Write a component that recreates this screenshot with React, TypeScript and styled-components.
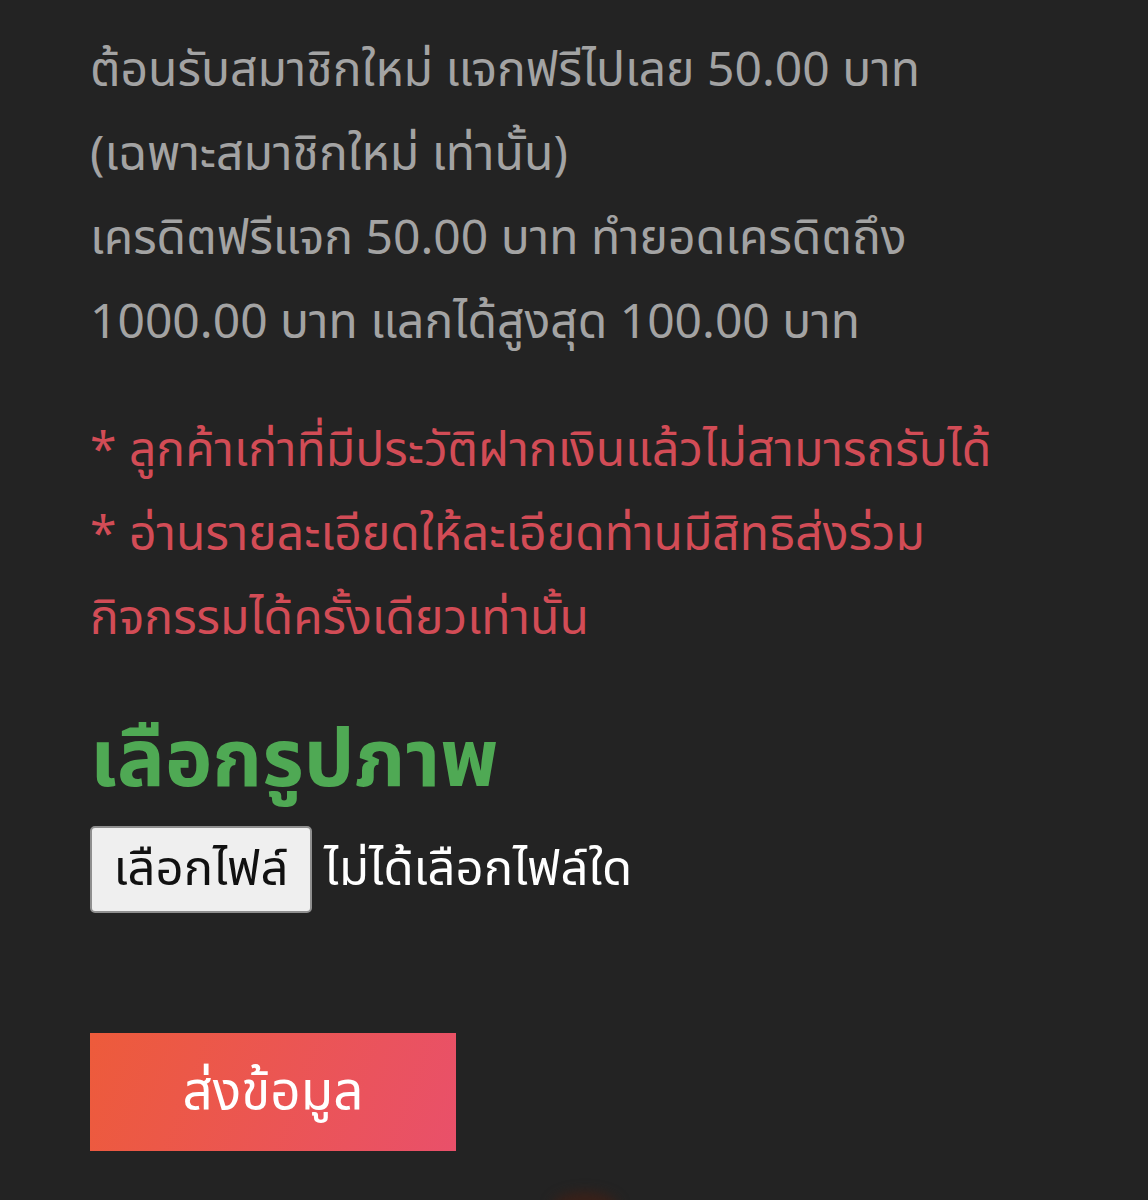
import styled, { createGlobalStyle } from 'styled-components'

const GlobalStyle = createGlobalStyle`
    html, body {
        margin: 0;
        padding: 0;
        background: #232323;
    }

    body {
        font-family: "Noto Sans", "Noto Sans Thai", "DejaVu Sans", sans-serif;
    }
`

const Page = styled.div`
    position: relative;
    min-height: 1200px;
    padding: 26px 90px 0;
    box-sizing: border-box;
    overflow: hidden;
`

const Paragraph = styled.p<{ color: string }>`
    margin: 0;
    font-size: 48px;
    line-height: 84px;
    white-space: nowrap;
    color: ${(props) => props.color};
`

const Notes = styled.div`
    margin-top: 44px;
`

const Heading = styled.h2`
    margin: 52px 0 0;
    font-size: 80px;
    line-height: 90px;
    font-weight: 700;
    color: #4fa954;
`

const FileRow = styled.div`
    display: flex;
    align-items: center;
    gap: 12px;
    margin-top: 26px;
`

const FileButton = styled.label`
    display: flex;
    align-items: center;
    justify-content: center;
    width: 222px;
    height: 87px;
    box-sizing: border-box;
    background: #efefef;
    border: 2px solid #8f8f8f;
    border-radius: 5px;
    font-size: 49px;
    color: #111;
    cursor: pointer;
`

const FileStatus = styled.span`
    font-size: 49px;
    color: #ffffff;
`

const SubmitButton = styled.button`
    display: flex;
    align-items: center;
    justify-content: center;
    margin-top: 120px;
    width: 366px;
    height: 118px;
    border: none;
    background: linear-gradient(110deg, #ed5b3b 0%, #e9506a 100%);
    font-family: inherit;
    font-size: 53px;
    color: #ffffff;
    cursor: pointer;
`

const Glow = styled.div`
    position: absolute;
    left: 552px;
    top: 1192px;
    width: 66px;
    height: 30px;
    border-radius: 50%;
    background: #3a2018;
    filter: blur(6px);
`

export default function App() {
    return (
        <>
            <GlobalStyle />
            <Page>
                <Paragraph color="#a3a3a3">
                    ต้อนรับสมาชิกใหม่ แจกฟรีไปเลย 50.00 บาท
                    <br />
                    (เฉพาะสมาชิกใหม่ เท่านั้น)
                    <br />
                    เครดิตฟรีแจก 50.00 บาท ทำยอดเครดิตถึง
                    <br />
                    1000.00 บาท แลกได้สูงสุด 100.00 บาท
                </Paragraph>

                <Notes>
                    <Paragraph color="#d24c56">
                        * ลูกค้าเก่าที่มีประวัติฝากเงินแล้วไม่สามารถรับได้
                        <br />
                        * อ่านรายละเอียดให้ละเอียดท่านมีสิทธิส่งร่วม
                        <br />
                        กิจกรรมได้ครั้งเดียวเท่านั้น
                    </Paragraph>
                </Notes>

                <Heading>เลือกรูปภาพ</Heading>

                <FileRow>
                    <FileButton>เลือกไฟล์</FileButton>
                    <FileStatus>ไม่ได้เลือกไฟล์ใด</FileStatus>
                </FileRow>

                <SubmitButton>ส่งข้อมูล</SubmitButton>

                <Glow />
            </Page>
        </>
    )
}
